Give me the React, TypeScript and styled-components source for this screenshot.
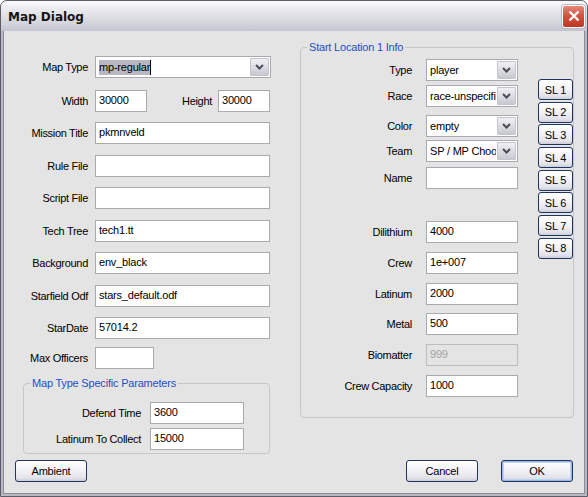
import type React from "react"
import styled, { createGlobalStyle } from "styled-components"

const GlobalStyle = createGlobalStyle`
  html, body {
    margin: 0;
    padding: 0;
    background: #ffffff;
  }
  body {
    font-family: "Liberation Sans", Arial, sans-serif;
    font-size: 11px;
  }
`

const leftRows = [
  { label: "Mission Title", value: "pkmnveld", top: 10 },
  { label: "Rule File", value: "", top: 11 },
  { label: "Script File", value: "", top: 10 },
  { label: "Tech Tree", value: "tech1.tt", top: 11 },
  { label: "Background", value: "env_black", top: 10 },
  { label: "Starfield Odf", value: "stars_default.odf", top: 11 },
  { label: "StarDate", value: "57014.2", top: 10 },
]

const combos = [
  { label: "Type", value: "player", top: 0 },
  { label: "Race", value: "race-unspecifi", top: 4 },
  { label: "Color", value: "empty", top: 8 },
  { label: "Team", value: "SP / MP Choo", top: 3 },
]

const resources = [
  { label: "Dilithium", value: "4000", top: 32 },
  { label: "Crew", value: "1e+007", top: 9 },
  { label: "Latinum", value: "2000", top: 9 },
  { label: "Metal", value: "500", top: 8 },
  { label: "Biomatter", value: "999", top: 9, disabled: true },
  { label: "Crew Capacity", value: "1000", top: 9 },
]

const ArrowGlyph: React.FC = () => (
  <svg width="9" height="6" viewBox="0 0 9 6">
    <path d="M1 1 L4.5 4.5 L8 1" fill="none" stroke="#4d4d55" strokeWidth="2" />
  </svg>
)

const Combo: React.FC<{ value: React.ReactNode; width: number }> = ({ value, width }) => (
  <ComboBox $width={width}>
    <ComboText>{value}</ComboText>
    <ComboArrow>
      <ArrowGlyph />
    </ComboArrow>
  </ComboBox>
)

const App: React.FC = () => {
  return (
    <>
      <GlobalStyle />
      <Window>
        <TitleBar>
          <Title>Map Dialog</Title>
          <CloseButton>
            <svg width="12" height="12" viewBox="0 0 12 12">
              <path d="M1.5 1.5 L10.5 10.5 M10.5 1.5 L1.5 10.5" stroke="#ffffff" strokeWidth="2.4" />
            </svg>
          </CloseButton>
        </TitleBar>

        <Body>
          <Main>
            <LeftColumn>
              <FieldRow $top={0}>
                <Label>Map Type</Label>
                <Combo
                  width={176}
                  value={
                    <>
                      <Selected>mp-regular</Selected>
                      <Caret />
                    </>
                  }
                />
              </FieldRow>

              <FieldRow $top={12}>
                <Label>Width</Label>
                <TextBox $width={52}>30000</TextBox>
                <InlineLabel>Height</InlineLabel>
                <TextBox $width={52}>30000</TextBox>
              </FieldRow>

              {leftRows.map((row) => (
                <FieldRow key={row.label} $top={row.top}>
                  <Label>{row.label}</Label>
                  <TextBox $width={175}>{row.value}</TextBox>
                </FieldRow>
              ))}

              <FieldRow $top={8}>
                <Label>Max Officers</Label>
                <TextBox $width={59} />
              </FieldRow>

              <SmallGroup>
                <Legend>Map Type Specific Parameters</Legend>
                <GroupRow $top={0} $labelWidth={111} $gap={9}>
                  <Label>Defend Time</Label>
                  <TextBox $width={94}>3600</TextBox>
                </GroupRow>
                <GroupRow $top={4} $labelWidth={111} $gap={9}>
                  <Label>Latinum To Collect</Label>
                  <TextBox $width={94}>15000</TextBox>
                </GroupRow>
              </SmallGroup>
            </LeftColumn>

            <RightColumn>
              <StartGroup>
                <Legend>Start Location 1 Info</Legend>
                <StartInner>
                  <StartFields>
                    {combos.map((c) => (
                      <GroupRow key={c.label} $top={c.top} $labelWidth={105} $gap={14}>
                        <Label>{c.label}</Label>
                        <Combo width={92} value={c.value} />
                      </GroupRow>
                    ))}
                    <GroupRow $top={5} $labelWidth={105} $gap={14}>
                      <Label>Name</Label>
                      <TextBox $width={92} />
                    </GroupRow>
                    {resources.map((r) => (
                      <GroupRow key={r.label} $top={r.top} $labelWidth={105} $gap={14}>
                        <Label>{r.label}</Label>
                        <TextBox $width={92} $disabled={r.disabled}>
                          {r.value}
                        </TextBox>
                      </GroupRow>
                    ))}
                  </StartFields>
                  <SlColumn>
                    {[1, 2, 3, 4, 5, 6, 7, 8].map((n) => (
                      <SlButton key={n}>SL {n}</SlButton>
                    ))}
                  </SlColumn>
                </StartInner>
              </StartGroup>
            </RightColumn>
          </Main>

          <Footer>
            <PushButton>Ambient</PushButton>
            <Spacer />
            <PushButton>Cancel</PushButton>
            <PushButton $default>OK</PushButton>
          </Footer>
        </Body>
      </Window>
    </>
  )
}

const Window = styled.div`
  width: 588px;
  height: 497px;
  box-sizing: border-box;
  display: flex;
  flex-direction: column;
  background: #b9b9c3;
  border: 1px solid #5c5c68;
  border-radius: 7px 7px 0 0;
  overflow: hidden;
`

const TitleBar = styled.div`
  height: 30px;
  flex: none;
  display: flex;
  align-items: center;
  justify-content: space-between;
  padding: 0 2px 0 7px;
  background: linear-gradient(to bottom, #fbfbfc 0%, #e6e6eb 35%, #d4d4dc 75%, #c4c4ce 100%);
`

const Title = styled.div`
  font-family: "DejaVu Sans", "Liberation Sans", sans-serif;
  font-weight: bold;
  font-size: 12px;
  color: #151515;
  padding-top: 2px;
`

const CloseButton = styled.div`
  width: 21px;
  height: 21px;
  display: flex;
  align-items: center;
  justify-content: center;
  border: 1px solid #ffffff;
  border-radius: 3px;
  background: linear-gradient(to bottom, #e8887a 0%, #d55340 45%, #bd3522 100%);
  box-shadow: 0 0 0 1px #b8b8c4;
`

const Body = styled.div`
  flex: 1;
  display: flex;
  flex-direction: column;
  margin: 0 2px 2px 2px;
  border: 1px solid #8c8c98;
  border-top: none;
  background: #e4e4e4;
`

const Main = styled.div`
  display: grid;
  grid-template-columns: 296px 1fr;
  align-items: start;
`

const LeftColumn = styled.div`
  padding-top: 25px;
  display: flex;
  flex-direction: column;
`

const RightColumn = styled.div`
  padding: 10px 10px 0 0;
`

const FieldRow = styled.div<{ $top: number }>`
  display: flex;
  align-items: center;
  gap: 7px;
  margin-top: ${(p) => p.$top}px;
`

const GroupRow = styled.div<{ $top: number; $labelWidth: number; $gap: number }>`
  display: grid;
  grid-template-columns: ${(p) => p.$labelWidth}px auto;
  column-gap: ${(p) => p.$gap}px;
  align-items: center;
  margin-top: ${(p) => p.$top}px;
  & > span:first-child {
    width: auto;
  }
`

const Label = styled.span`
  width: 84px;
  text-align: right;
  color: #000;
  letter-spacing: -0.3px;
  white-space: nowrap;
`

const InlineLabel = styled.span`
  width: 58px;
  text-align: right;
  letter-spacing: -0.3px;
  margin-right: -1px;
`

const TextBox = styled.div<{ $width: number; $disabled?: boolean }>`
  width: ${(p) => p.$width}px;
  height: 22px;
  box-sizing: border-box;
  border: 1px solid ${(p) => (p.$disabled ? "#bcbcc0" : "#a9a9b0")};
  background: ${(p) => (p.$disabled ? "#e4e4e4" : "#ffffff")};
  color: ${(p) => (p.$disabled ? "#a3a3a3" : "#000")};
  padding: 3px 3px 0;
  letter-spacing: -0.2px;
  white-space: nowrap;
  overflow: hidden;
`

const ComboBox = styled.div<{ $width: number }>`
  width: ${(p) => p.$width}px;
  height: 22px;
  box-sizing: border-box;
  display: flex;
  align-items: stretch;
  border: 1px solid #a9a9b0;
  background: #ffffff;
`

const ComboText = styled.div`
  flex: 1;
  display: flex;
  align-items: center;
  padding-left: 3px;
  letter-spacing: -0.2px;
  white-space: nowrap;
  overflow: hidden;
`

const Selected = styled.span`
  background: #b8b8c2;
  color: #000;
  line-height: 15px;
`

const Caret = styled.span`
  width: 1px;
  height: 15px;
  background: #000;
`

const ComboArrow = styled.div`
  width: 17px;
  margin: 1px;
  display: flex;
  align-items: center;
  justify-content: center;
  border: 1px solid #c4c4cc;
  border-radius: 1px;
  background: linear-gradient(to bottom, #f0f0f4 0%, #d9d9e1 60%, #c7c7d1 100%);
`

const SmallGroup = styled.fieldset`
  margin: 8px 0 0 19px;
  width: 247px;
  box-sizing: border-box;
  border: 1px solid #c6c6c6;
  border-radius: 4px;
  padding: 12px 0 3px 6px;
`

const StartGroup = styled.fieldset`
  margin: 0;
  box-sizing: border-box;
  border: 1px solid #c6c6c6;
  border-radius: 4px;
  padding: 5px 0 20px 6px;
  min-width: 0;
`

const Legend = styled.legend`
  padding: 0 2px;
  line-height: 13px;
  color: #1e4fc4;
  letter-spacing: -0.2px;
`

const StartInner = styled.div`
  display: flex;
  gap: 20px;
  align-items: flex-start;
`

const StartFields = styled.div`
  display: flex;
  flex-direction: column;
`

const SlColumn = styled.div`
  display: flex;
  flex-direction: column;
  gap: 1.7px;
  padding-top: 20px;
`

const buttonFace = `
  box-sizing: border-box;
  display: flex;
  align-items: center;
  justify-content: center;
  border: 1px solid #1f3461;
  border-radius: 3px;
  background: linear-gradient(to bottom, #ffffff 0%, #f3f3f6 45%, #e2e2ea 85%, #cdcdd8 100%);
  color: #000;
  letter-spacing: -0.2px;
`

const SlButton = styled.div`
  ${buttonFace}
  width: 35px;
  height: 21px;
`

const PushButton = styled.div<{ $default?: boolean }>`
  ${buttonFace}
  width: 72px;
  height: 22px;
  box-shadow: ${(p) => (p.$default ? "inset 0 0 0 1px #9ab6e6, inset 0 0 0 2px #c4d4f0" : "none")};
`

const Footer = styled.div`
  display: flex;
  align-items: center;
  gap: 23px;
  padding: 6px 11px 0;
`

const Spacer = styled.div`
  flex: 1;
`

export default App
